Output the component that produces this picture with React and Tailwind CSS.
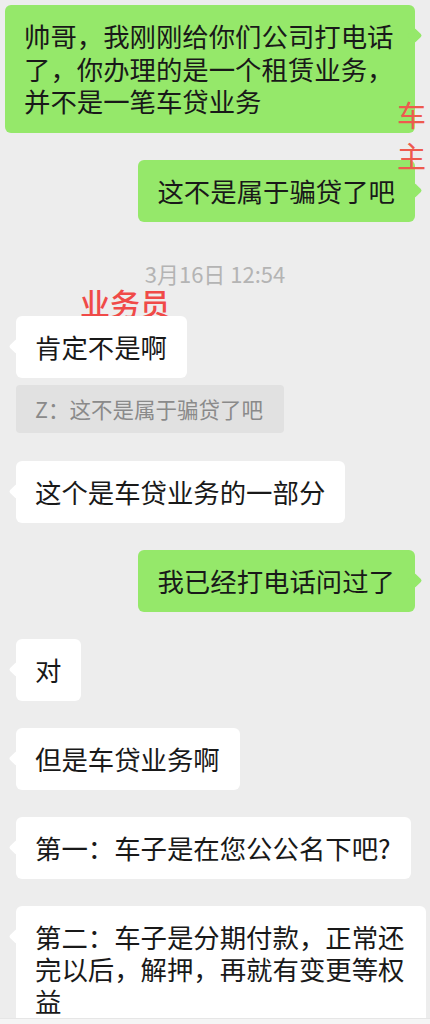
const font = { fontFamily: '"Noto Sans CJK SC", "Noto Sans", sans-serif' };

function Bubble({ side, children }) {
  const mine = side === 'right';
  return (
    <div className={mine ? 'flex justify-end pr-[15px]' : 'flex justify-start pl-[16px]'}>
      <div
        className={
          'relative max-w-[410px] rounded-[6px] pl-[19px] pr-[20px] py-[15px] text-[26.4px] leading-[32px] text-[#191919] ' +
          (mine ? 'bg-[#95e86a]' : 'bg-white')
        }
      >
        <span
          className={
            'absolute top-[25px] h-[11px] w-[11px] rotate-45 rounded-[2px] ' +
            (mine ? 'right-[-5px] bg-[#95e86a]' : 'left-[-5px] bg-white')
          }
        />
        <span className="relative">{children}</span>
      </div>
    </div>
  );
}

export default function App() {
  return (
    <div className="relative flex h-[1024px] w-full flex-col overflow-hidden bg-[#ededed]" style={font}>
      <div className="flex-1 overflow-hidden pt-[5px]">
        <div className="flex flex-col">
          <div className="[&>div>div]:leading-[32.5px]">
            <Bubble side="right">帅哥，我刚刚给你们公司打电话了，你办理的是一个租赁业务，并不是一笔车贷业务</Bubble>
          </div>
          <div className="mt-[27px]">
            <Bubble side="right">这不是属于骗贷了吧</Bubble>
          </div>

          <div className="mt-[39px] text-center text-[22px] leading-[24px] text-[#b4b4b4]">3月16日 12:54</div>
          <div className="mt-[3px] pl-[80px] text-[30px] font-medium leading-[28px] text-[#f04a48]">业务员</div>

          <Bubble side="left">肯定不是啊</Bubble>
          <div className="mt-[7px] pl-[16px]">
            <div className="inline-block rounded-[4px] bg-[#e1e1e1] pl-[19px] pr-[21px] py-[11px] text-[21.5px] leading-[26px] text-[#8a8a8a]">
              Z：这不是属于骗贷了吧
            </div>
          </div>

          <div className="mt-[28px] flex flex-col gap-[27px]">
            <Bubble side="left">这个是车贷业务的一部分</Bubble>
            <Bubble side="right">我已经打电话问过了</Bubble>
            <Bubble side="left">对</Bubble>
            <Bubble side="left">但是车贷业务啊</Bubble>
            <Bubble side="left">第一：车子是在您公公名下吧?</Bubble>
            <Bubble side="left">第二：车子是分期付款，正常还完以后，解押，再就有变更等权益</Bubble>
          </div>
        </div>
      </div>
      <div className="h-[6px] border-t border-[#e6e6e6] bg-[#f5f5f5]" />

      <div className="absolute right-[4px] top-[94px] flex flex-col text-[29px] leading-[41px] text-[#ee5a4e]">
        <span>车</span>
        <span>主</span>
      </div>
    </div>
  );
}
